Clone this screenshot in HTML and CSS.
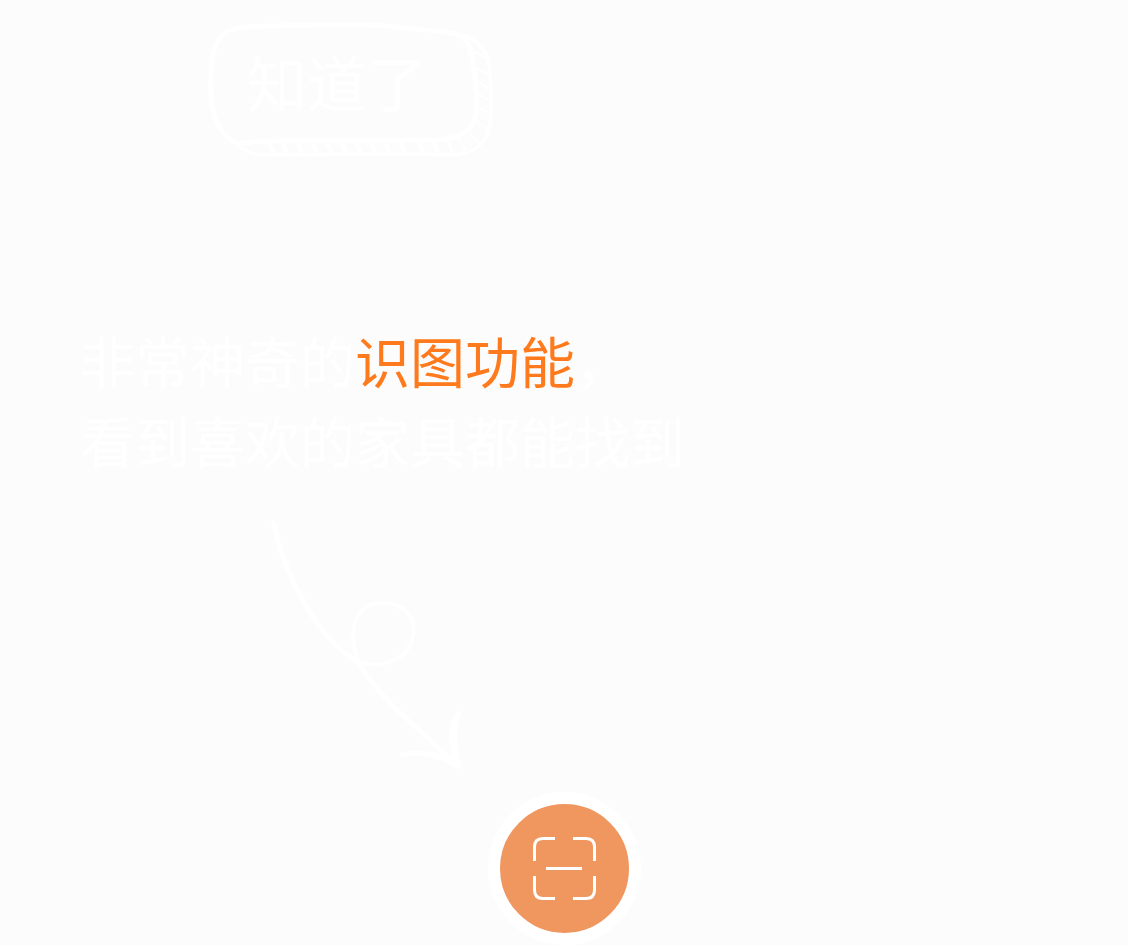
FILE: index.html
```html
<!DOCTYPE html>
<html lang="zh-CN">
<head>
<meta charset="utf-8">
<meta name="viewport" content="width=device-width, initial-scale=1">
<title>识图功能</title>
<link rel="stylesheet" href="styles.css">
</head>
<body>
<main class="guide">
  <button class="confirm" type="button">
    <svg class="confirm-frame" viewBox="24 36 858 411" aria-hidden="true">
      <g fill="none" stroke="#fff" stroke-linecap="round" stroke-linejoin="round">
        <path stroke-width="14" d="M110 400C50 370 32 300 32 230C32 140 42 90 80 66C120 44 190 50 300 46C420 42 520 42 600 52L740 66C800 76 812 104 820 160C828 220 834 270 828 315C820 360 780 384 720 390L400 392Q200 390 110 400Z"/>
        <path stroke-width="11" d="M770 72C840 84 866 125 870 190C876 270 878 320 862 370C845 412 810 432 760 434L560 432L180 435Q135 428 110 400"/>
        <path stroke-width="7" d="M820 125L852 140M824 172L866 192M828 212L872 238M830 252L872 270M830 290L866 308M826 330L856 356M800 362L834 398M770 378L798 418M740 388L758 430"/>
        <path stroke-width="14" d="M700 394L714 428M655 394L670 428M600 394L614 428M555 394L568 428M512 394L526 428M468 394L480 428M424 394L437 428M380 394L392 428M336 394L350 428M292 394L305 428M248 396L260 428M208 398L222 430"/>
      </g>
    </svg>
    <span class="confirm-label">知道了</span>
  </button>
  <p class="message">
    <span class="line">非常神奇的<strong class="accent">识图功能</strong>，</span>
    <span class="line">看到喜欢的家具都能找到</span>
  </p>
  <svg class="arrow" viewBox="30 24 585 756" aria-hidden="true">
    <g fill="none" stroke="#fff" stroke-linecap="round" stroke-linejoin="round">
      <path stroke-width="15" d="M41 38C64 160 135 310 220 398C245 424 270 444 296 457"/>
      <path stroke-width="12" d="M296 457C350 470 400 462 433 430C465 392 473 340 443 309C405 270 335 268 302 305C270 345 277 412 296 457"/>
      <path stroke-width="15" d="M296 457C350 560 490 670 597 768"/>
    </g>
    <path fill="#fff" d="M422 730C475 716 525 722 578 742C563 700 564 640 588 607Q598 598 605 609C582 655 590 710 606 770Q604 780 592 776C535 741 480 732 425 742Q414 736 422 730Z"/>
  </svg>
</main>
<footer class="dock">
  <button class="scan" type="button" aria-label="扫一扫">
    <svg class="scan-icon" viewBox="0 0 126 126" aria-hidden="true">
      <path fill="none" stroke="#fff" stroke-width="6" d="M3 48V20Q3 3 20 3H44M80 3H106Q123 3 123 20V48M123 78V106Q123 123 106 123H80M44 123H20Q3 123 3 106V78M26 63H98"/>
    </svg>
  </button>
</footer>
</body>
</html>
```
FILE: styles.css
```css
* {
  box-sizing: border-box;
}

body {
  margin: 0;
  min-height: 100vh;
  display: flex;
  flex-direction: column;
  justify-content: space-between;
  background: #fcfcfc;
  color: #fff;
  font-family: "Noto Sans CJK SC", sans-serif;
}

.guide {
  display: flex;
  flex-direction: column;
  align-items: flex-start;
  padding: 22px 80px 0;
}

.confirm {
  display: grid;
  place-items: center;
  margin-left: 128px;
  padding: 0;
  border: 0;
  background: none;
  color: inherit;
  font: inherit;
  cursor: pointer;
}

.confirm-frame,
.confirm-label {
  grid-area: 1 / 1;
}

.confirm-frame {
  display: block;
  width: 286px;
}

.confirm-label {
  padding: 0 28px 20px 0;
  font-size: 60px;
  line-height: 80px;
}

.message {
  margin: 160px 0 0;
  font-size: 55px;
  line-height: 80px;
}

.line {
  display: block;
}

.accent {
  color: #ff7a1c;
  font-weight: 400;
}

.arrow {
  display: block;
  width: 195px;
  margin: 39px 0 0 190px;
}

.dock {
  display: flex;
  justify-content: center;
}

.scan {
  display: grid;
  place-items: center;
  width: 153px;
  height: 153px;
  padding: 0;
  border: 12px solid #fff;
  border-radius: 50%;
  background: #f0965f;
  cursor: pointer;
}

.scan-icon {
  width: 63px;
  height: 63px;
}
```
